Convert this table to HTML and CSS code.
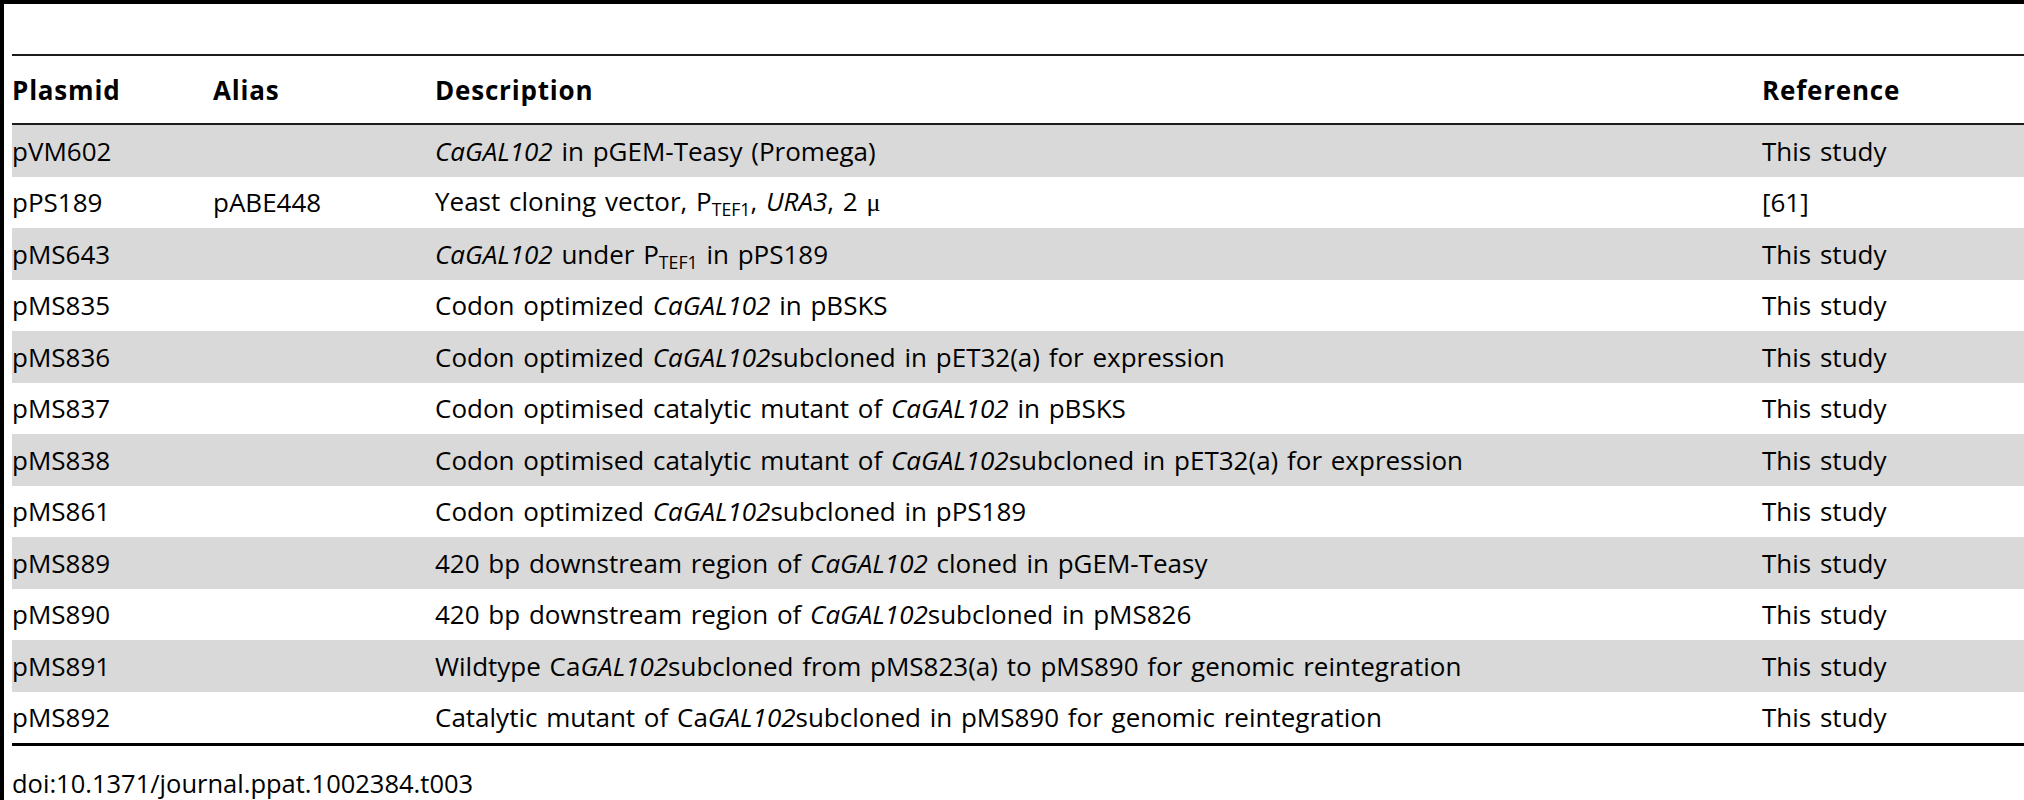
FILE: index.html
```html
<!DOCTYPE html>
<html lang="en">
<head>
<meta charset="utf-8">
<title>Plasmids used in this study</title>
<link rel="stylesheet" href="styles.css">
</head>
<body>
<div class="page">
  <div class="rule-top"></div>
  <table class="plasmids">
    <colgroup>
      <col class="c-plasmid">
      <col class="c-alias">
      <col class="c-desc">
      <col class="c-ref">
    </colgroup>
    <thead>
      <tr><th>Plasmid</th><th>Alias</th><th>Description</th><th>Reference</th></tr>
    </thead>
    <tbody>
      <tr><td>pVM602</td><td></td><td><i>CaGAL102</i> in pGEM-Teasy (Promega)</td><td>This study</td></tr>
      <tr><td>pPS189</td><td>pABE448</td><td>Yeast cloning vector, P<sub>TEF1</sub>, <i>URA3</i>, 2 <span class="mu">μ</span></td><td>[61]</td></tr>
      <tr><td>pMS643</td><td></td><td><i>CaGAL102</i> under P<sub>TEF1</sub> in pPS189</td><td>This study</td></tr>
      <tr><td>pMS835</td><td></td><td>Codon optimized <i>CaGAL102</i> in pBSKS</td><td>This study</td></tr>
      <tr><td>pMS836</td><td></td><td>Codon optimized <i>CaGAL102</i>subcloned in pET32(a) for expression</td><td>This study</td></tr>
      <tr><td>pMS837</td><td></td><td>Codon optimised catalytic mutant of <i>CaGAL102</i> in pBSKS</td><td>This study</td></tr>
      <tr><td>pMS838</td><td></td><td>Codon optimised catalytic mutant of <i>CaGAL102</i>subcloned in pET32(a) for expression</td><td>This study</td></tr>
      <tr><td>pMS861</td><td></td><td>Codon optimized <i>CaGAL102</i>subcloned in pPS189</td><td>This study</td></tr>
      <tr><td>pMS889</td><td></td><td>420 bp downstream region of <i>CaGAL102</i> cloned in pGEM-Teasy</td><td>This study</td></tr>
      <tr><td>pMS890</td><td></td><td>420 bp downstream region of <i>CaGAL102</i>subcloned in pMS826</td><td>This study</td></tr>
      <tr><td>pMS891</td><td></td><td>Wildtype Ca<i>GAL102</i>subcloned from pMS823(a) to pMS890 for genomic reintegration</td><td>This study</td></tr>
      <tr><td>pMS892</td><td></td><td>Catalytic mutant of Ca<i>GAL102</i>subcloned in pMS890 for genomic reintegration</td><td>This study</td></tr>
    </tbody>
  </table>
  <p class="doi">doi:10.1371/journal.ppat.1002384.t003</p>
</div>
</body>
</html>
```
FILE: styles.css
```css
html, body {
  margin: 0;
  padding: 0;
  background: #fff;
}
body {
  font-family: "Open Sans", "Liberation Sans", sans-serif;
  color: #000;
  overflow: hidden;
}
.page {
  height: 800px;
  box-sizing: border-box;
  border-left: 4px solid #000;
  padding-left: 8px;
}
.rule-top {
  height: 4px;
  background: #000;
  margin-left: -8px;
}
.plasmids {
  width: 100%;
  margin-top: 50px;
  border-collapse: separate;
  border-spacing: 0;
  table-layout: fixed;
  font-size: 26px;
  word-spacing: 2px;
}
.c-plasmid { width: 201px; }
.c-alias { width: 222px; }
.c-desc { width: 1327px; }
.plasmids th {
  height: 67px;
  padding: 0;
  text-align: left;
  font-weight: 700;
  letter-spacing: 0.8px;
  line-height: 30px;
  vertical-align: middle;
  border-top: 2px solid #1c1c1c;
  border-bottom: 2px solid #1c1c1c;
}
.plasmids td {
  height: 51.5px;
  padding: 0;
  line-height: 30px;
  vertical-align: middle;
  white-space: nowrap;
}
.plasmids tbody tr:nth-child(odd) td {
  background: #d9d9d9;
}
.plasmids tbody tr:last-child td {
  border-bottom: 3px solid #000;
}
.plasmids sub {
  font-size: 0.68em;
  vertical-align: -0.3em;
  line-height: 0;
  word-spacing: 0;
}
.mu {
  font-family: "Liberation Serif", serif;
}
.doi {
  margin: 21px 0 0;
  font-size: 25.5px;
  line-height: 32px;
}
```
